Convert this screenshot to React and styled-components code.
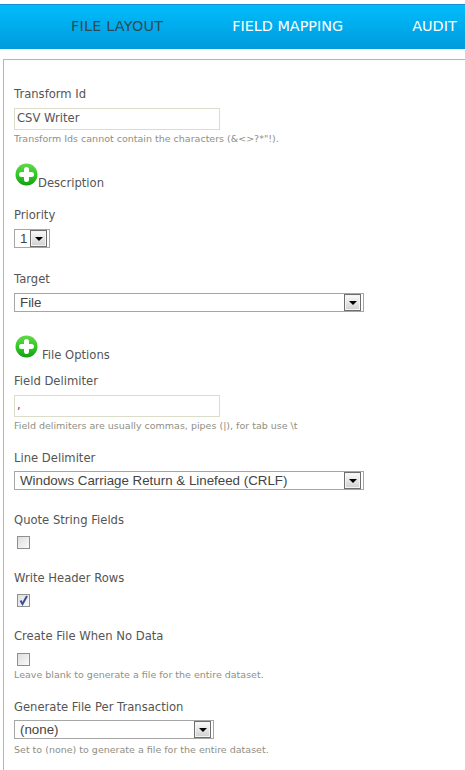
import React from 'react';
import styled, {createGlobalStyle} from 'styled-components';

const GlobalStyle = createGlobalStyle`
  html, body {
    margin: 0;
    padding: 0;
    background: #fff;
    overflow: hidden;
  }
  body {
    font-family: "DejaVu Sans", Verdana, sans-serif;
  }
`;

const Page = styled.div`
  width: 465px;
  height: 770px;
  overflow: hidden;
  padding-top: 4px;
  box-sizing: border-box;
`;

const NavBar = styled.div`
  height: 45px;
  box-sizing: border-box;
  border-top: 1px solid #1a8fd0;
  background: linear-gradient(to bottom, #00bbfb 0%, #00b4f4 25%, #009bdc 100%);
  display: flex;
  align-items: center;
  padding: 0 0 3px 71px;
  gap: 69px;
  white-space: nowrap;
`;

const NavItem = styled.span`
  font-size: 14.4px;
  color: ${({active}) => active ? '#2f4a52' : '#ffffff'};
  letter-spacing: ${({active}) => active ? '0.2px' : '0'};
`;

const Panel = styled.div`
  margin: 10px 0 0 3px;
  width: 480px;
  height: 720px;
  box-sizing: border-box;
  border: 1px solid #b4b4b4;
  padding: 20px 0 0 10px;
`;

const Label = styled.div`
  font-size: 11.6px;
  line-height: 16px;
  color: #555;
  margin-top: ${({top}) => top || 0}px;
`;

const TextInput = styled.div`
  width: 206px;
  height: 22px;
  box-sizing: border-box;
  border: 1px solid #dcdccb;
  margin-top: 6px;
  padding-left: 2px;
  font-size: 11.6px;
  line-height: 19px;
  color: #555;
`;

const Hint = styled.div`
  font-size: 9.5px;
  line-height: 13px;
  color: #8f8f85;
  margin-top: ${({top}) => top || 2}px;
`;

const AddRow = styled.div`
  display: flex;
  align-items: baseline;
  margin-top: ${({top}) => top}px;
  gap: ${({gap}) => gap}px;
  margin-left: 1px;
`;

const AddText = styled.span`
  font-size: 11.6px;
  line-height: 15px;
  color: #555;
`;

const SelectBox = styled.div`
  width: ${({width}) => width}px;
  height: 19px;
  box-sizing: border-box;
  border: 1px solid #a6a6a6;
  margin-top: ${({top}) => top || 6}px;
  display: flex;
  align-items: center;
  justify-content: space-between;
  padding: 0 2px 0 5px;
  font-family: "Liberation Sans", Arial, sans-serif;
  font-size: 13.33px;
  color: #444;
  white-space: nowrap;
`;

const SelectArrow = styled.span`
  width: 17px;
  height: 17px;
  box-sizing: border-box;
  border: 1px solid #6e6e6e;
  box-shadow: inset 0 0 0 1px #f4f4f4;
  background: linear-gradient(to bottom, #fbfbfb, #d0d0d0);
  display: flex;
  align-items: center;
  justify-content: center;

  &::after {
    content: "";
    border-left: 4px solid transparent;
    border-right: 4px solid transparent;
    border-top: 4px solid #000;
  }
`;

const CheckBox = styled.div`
  width: 13px;
  height: 13px;
  box-sizing: border-box;
  border: 1px solid #8f8f8f;
  background: linear-gradient(135deg, #dedede, #fbfbfb);
  margin: ${({top}) => top || 8}px 0 0 3px;
  display: flex;
  align-items: center;
  justify-content: center;
`;

const PlusIcon = () => (
    <svg width="23" height="24" viewBox="0 0 23 24">
        <defs>
            <linearGradient id="plusGreen" x1="0" y1="0" x2="0" y2="1">
                <stop offset="0" stopColor="#62d94a"/>
                <stop offset="0.5" stopColor="#35c926"/>
                <stop offset="1" stopColor="#12a012"/>
            </linearGradient>
        </defs>
        <circle cx="11.500" cy="11.500" r="11" fill="url(#plusGreen)"/>
        <path d="M11.500 6.500v10M6.500 11.500h10" fill="none" stroke="#fff" strokeWidth="5" strokeLinecap="round"/>
    </svg>
);

const CheckMark = () => (
    <svg width="11" height="11" viewBox="0 0 11 11">
        <path d="M2.500 5.500L4.500 9 9 1" fill="none" stroke="#3c4f93" strokeWidth="2"/>
    </svg>
);

const Select = ({width, top, children}) => (
    <SelectBox width={width} top={top}>
        {children}
        <SelectArrow/>
    </SelectBox>
);

const App = () => (
    <Page>
        <GlobalStyle/>
        <NavBar>
            <NavItem active>FILE LAYOUT</NavItem>
            <NavItem>FIELD MAPPING</NavItem>
            <NavItem>AUDIT</NavItem>
        </NavBar>
        <Panel>
            <Label top={6}>Transform Id</Label>
            <TextInput>CSV Writer</TextInput>
            <Hint>Transform Ids cannot contain the characters (&amp;&lt;&gt;?*"!).</Hint>
            <AddRow top={18} gap={0}>
                <PlusIcon/>
                <AddText>Description</AddText>
            </AddRow>
            <Label top={16}>Priority</Label>
            <Select width={36}>1</Select>
            <Label top={23}>Target</Label>
            <Select width={350}>File</Select>
            <AddRow top={23} gap={4}>
                <PlusIcon/>
                <AddText>File Options</AddText>
            </AddRow>
            <Label top={10}>Field Delimiter</Label>
            <TextInput>,</TextInput>
            <Hint>Field delimiters are usually commas, pipes (|), for tab use \t</Hint>
            <Label top={18}>Line Delimiter</Label>
            <Select width={350} top={5}>Windows Carriage Return &amp; Linefeed (CRLF)</Select>
            <Label top={22}>Quote String Fields</Label>
            <CheckBox top={8}/>
            <Label top={21}>Write Header Rows</Label>
            <CheckBox top={8}><CheckMark/></CheckBox>
            <Label top={21}>Create File When No Data</Label>
            <CheckBox top={9}/>
            <Hint>Leave blank to generate a file for the entire dataset.</Hint>
            <Label top={18}>Generate File Per Transaction</Label>
            <Select width={200} top={5}>(none)</Select>
            <Hint top={4}>Set to (none) to generate a file for the entire dataset.</Hint>
        </Panel>
    </Page>
);

export default App;
